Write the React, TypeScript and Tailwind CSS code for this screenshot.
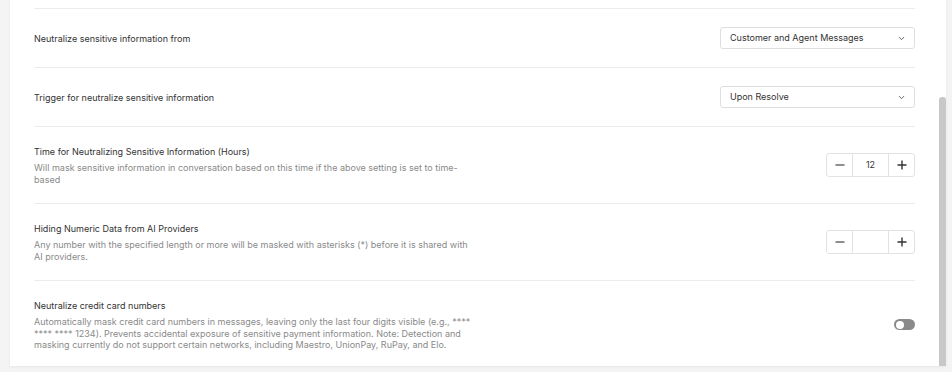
import { ChevronDown } from 'lucide-react';

const font = { fontFamily: 'Inter, "Noto Sans", sans-serif' };

function Select({ value }: { value: string }) {
  return (
    <div className="w-[195px] h-[22px] border border-[#dedede] rounded-[3px] bg-white flex items-center justify-between pl-[9px] pr-[8px]">
      <span className="text-[9px] text-[#333]">{value}</span>
      <ChevronDown className="w-[9px] h-[9px] text-[#444]" strokeWidth={2.2} />
    </div>
  );
}

function Stepper({ value }: { value: string }) {
  return (
    <div className="flex h-[24px] border border-[#e2e2e2] rounded-[3px] bg-white">
      <div className="w-[26px] flex items-center justify-center border-r border-[#e2e2e2]">
        <svg width="10" height="10" viewBox="0 0 10 10">
          <path d="M0.5 5h9" stroke="#444" strokeWidth="1.2" />
        </svg>
      </div>
      <div className="w-[35px] flex items-center justify-center text-[9px] text-[#333]">{value}</div>
      <div className="w-[26px] flex items-center justify-center border-l border-[#e2e2e2]">
        <svg width="10" height="10" viewBox="0 0 10 10">
          <path d="M0.5 5h9M5 0.5v9" stroke="#333" strokeWidth="1.4" />
        </svg>
      </div>
    </div>
  );
}

function Toggle() {
  return (
    <div className="w-[21px] h-[11px] rounded-full bg-[#8a8a8a] flex items-center pl-[1.5px]">
      <span className="block w-[8px] h-[8px] rounded-full bg-white" />
    </div>
  );
}

const rows = [
  { title: 'Neutralize sensitive information from', control: <Select value="Customer and Agent Messages" /> },
  { title: 'Trigger for neutralize sensitive information', control: <Select value="Upon Resolve" /> },
  {
    title: 'Time for Neutralizing Sensitive Information (Hours)',
    desc: 'Will mask sensitive information in conversation based on this time if the above setting is set to time-based',
    control: <Stepper value="12" />,
  },
  {
    title: 'Hiding Numeric Data from AI Providers',
    desc: 'Any number with the specified length or more will be masked with asterisks (*) before it is shared with AI providers.',
    control: <Stepper value="" />,
  },
  {
    title: 'Neutralize credit card numbers',
    desc: 'Automatically mask credit card numbers in messages, leaving only the last four digits visible (e.g., **** **** **** 1234). Prevents accidental exposure of sensitive payment information. Note: Detection and masking currently do not support certain networks, including Maestro, UnionPay, RuPay, and Elo.',
    control: <Toggle />,
  },
];

export default function App() {
  return (
    <div className="w-[952px] h-[372px] bg-[#f4f4f4] flex pl-[10px] pr-[6px] overflow-hidden" style={font}>
      <div className="flex-1 h-[366px] bg-white flex overflow-hidden shadow-[0_1px_3px_rgba(0,0,0,0.06)]">
        <div className="flex-1 px-6">
          <div className="h-[9px] border-b border-[#ececec]" />
          {rows.map((row, i) => (
            <div
              key={i}
              className="flex items-center justify-between border-b border-[#ececec] py-[18px] last:border-b-0"
            >
              <div className="w-[440px]">
                <div className="text-[9px] leading-[13px] text-[#333]">{row.title}</div>
                {row.desc && (
                  <div className="text-[9px] leading-[11.5px] text-[#8a8a8a] mt-[4px]">{row.desc}</div>
                )}
              </div>
              {row.control}
            </div>
          ))}
        </div>
        <div className="w-[7px] flex flex-col">
          <div className="mt-[97px] flex-1 bg-[#c8c8c8] rounded-t-[3px]" />
        </div>
      </div>
    </div>
  );
}
